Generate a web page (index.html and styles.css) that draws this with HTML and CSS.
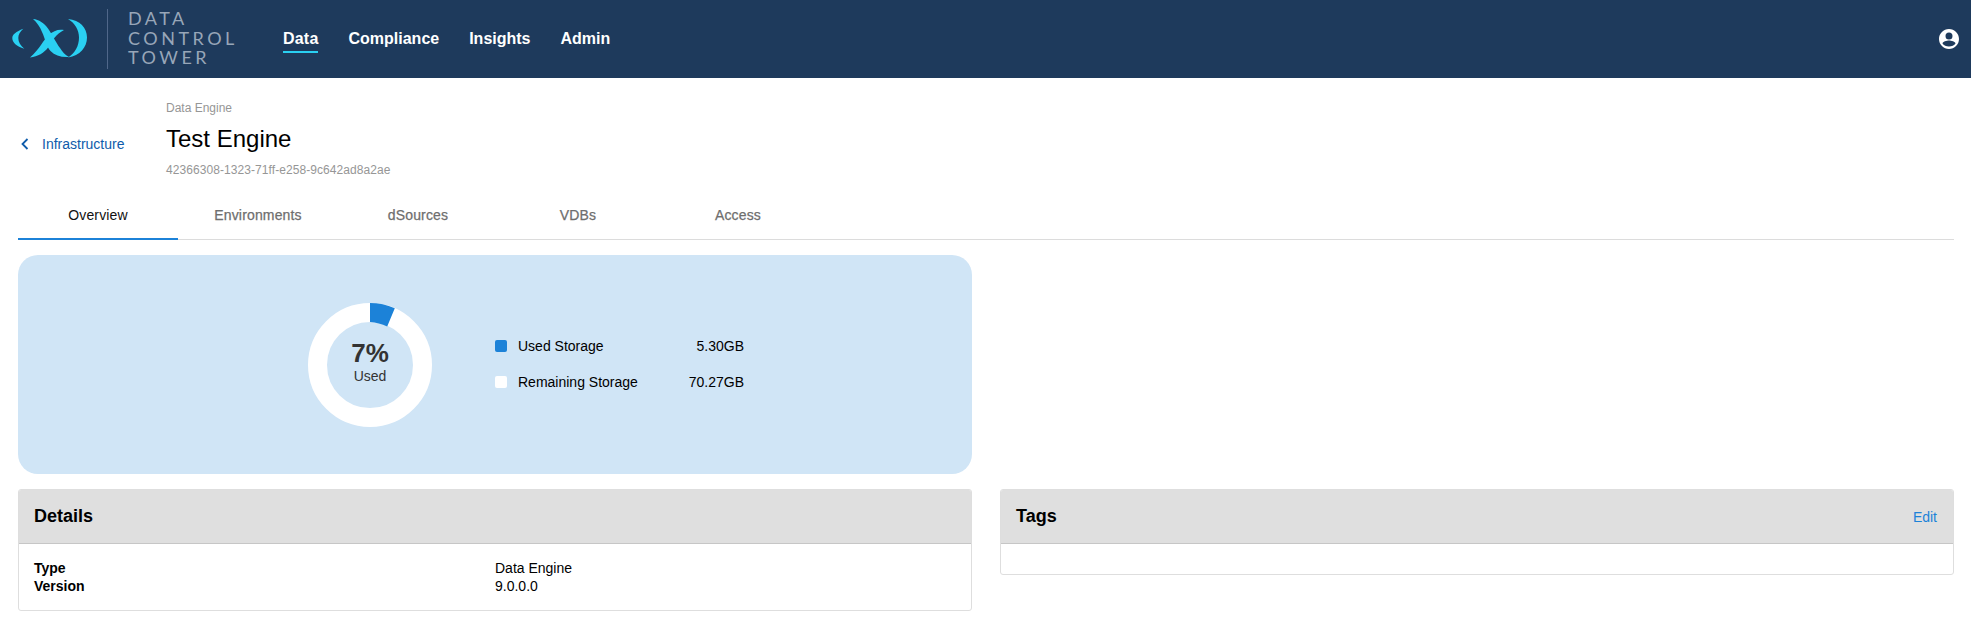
FILE: index.html
```html
<!DOCTYPE html>
<html lang="en">
<head>
<meta charset="utf-8">
<title>Data Control Tower</title>
<link rel="stylesheet" href="styles.css">
</head>
<body>
<header class="topbar">
  <div class="logo">
    <svg class="logo-mark" viewBox="0 0 78 40" width="78" height="40" aria-hidden="true">
      <path class="lm" d="M11.300 9.700 C4 12.500 .3 15.500 .3 19 C.3 23.500 4.500 27.500 12.300 29.700 C8.500 26.500 6.300 23 6.300 19 C6.300 15.500 8 12.500 11.300 9.700Z"/>
      <path class="lm" d="M21 0 C27 .5 32 4 36 9.500 C40 15 44 24 48 29 C50.500 33 53 36 57 38 C49 38.500 43 36.500 38.500 32 C34 27 33 19 30 13 C28 8 25 3.500 21 0Z"/>
      <path class="lm" d="M52 11 C46 10 41 12 37 16 C31 21 28 30 18 38.500 C26 37.500 32 34 36.500 28 C40 22 44 15 52 11Z"/>
      <path class="lm" d="M56 0 C68 1 75 9 75 18.500 C75 28 68 37 56 38.500 C63 34 67 27 67 18.500 C67 11 63 4 56 0Z"/>
    </svg>
    <div class="logo-rule"></div>
    <div class="logo-text"><span>DATA</span><span>CONTROL</span><span>TOWER</span></div>
  </div>
  <nav class="mainnav">
    <a class="nav-item active">Data</a>
    <a class="nav-item">Compliance</a>
    <a class="nav-item">Insights</a>
    <a class="nav-item">Admin</a>
  </nav>
  <svg class="account" viewBox="0 0 24 24" width="24" height="24" aria-hidden="true">
    <path fill="#fff" d="M12 2C6.480 2 2 6.480 2 12s4.480 10 10 10 10-4.480 10-10S17.520 2 12 2zm0 3.500a3.500 3.500 0 1 1 0 7 3.500 3.500 0 0 1 0-7zM12 19.500c-2.800 0-5.300-1.200-6.500-3 .100-1.900 4.300-3 6.500-3s6.400 1.100 6.500 3c-1.200 1.800-3.700 3-6.500 3z"/>
  </svg>
</header>

<main class="page">
  <section class="titlebar">
    <a class="back">
      <svg viewBox="0 0 8 12" width="8" height="12" aria-hidden="true"><path d="M6.500 1 L1.500 6 L6.500 11" fill="none" stroke="#0f5cab" stroke-width="1.800"/></svg>
      <span>Infrastructure</span>
    </a>
    <div class="titles">
      <div class="eyebrow">Data Engine</div>
      <h1>Test Engine</h1>
      <div class="uuid">42366308-1323-71ff-e258-9c642ad8a2ae</div>
    </div>
  </section>

  <div class="tabs">
    <a class="tab active">Overview</a>
    <a class="tab">Environments</a>
    <a class="tab">dSources</a>
    <a class="tab">VDBs</a>
    <a class="tab">Access</a>
  </div>

  <div class="grid">
    <section class="storage">
      <div class="donut">
        <svg viewBox="0 0 124 124" width="124" height="124" aria-hidden="true">
          <circle cx="62" cy="62" r="52.500" fill="none" stroke="#fff" stroke-width="19"/>
          <path d="M62 0 A62 62 0 0 1 86.800 5.200 L79.200 23.600 A43 43 0 0 0 62 19 Z" fill="#1c82d8"/>
        </svg>
        <div class="donut-label"><strong>7%</strong><span>Used</span></div>
      </div>
      <div class="legend">
        <div class="legend-row"><i class="swatch used"></i><span class="legend-name">Used Storage</span><span class="legend-val">5.30GB</span></div>
        <div class="legend-row"><i class="swatch"></i><span class="legend-name">Remaining Storage</span><span class="legend-val">70.27GB</span></div>
      </div>
    </section>
    <div class="spacer"></div>

    <section class="panel">
      <div class="panel-head"><h2>Details</h2></div>
      <div class="panel-body details">
        <b>Type</b><span>Data Engine</span>
        <b>Version</b><span>9.0.0.0</span>
      </div>
    </section>

    <section class="panel tags">
      <div class="panel-head"><h2>Tags</h2><a class="edit">Edit</a></div>
      <div class="panel-body empty"></div>
    </section>
  </div>
</main>
</body>
</html>
```
FILE: styles.css
```css
* { box-sizing: border-box; }
html, body { margin: 0; padding: 0; background: #fff; }
body { font-family: "Liberation Sans", Arial, sans-serif; color: #000; overflow: hidden; }

.topbar { height: 78px; background: #1e3a5c; display: flex; align-items: center; padding: 0 10px 0 12px; }
.logo { display: flex; align-items: center; width: 271px; }
.logo-mark { flex: none; }
.lm { fill: #2ad0f2; }
.logo-rule { width: 1px; height: 60px; background: #50678a; margin-left: 17px; }
.logo-text { display: flex; flex-direction: column; margin-left: 20px; margin-top: -1px; font-family: Lato, sans-serif; font-size: 18px; line-height: 19.500px; letter-spacing: 3.500px; color: #98a6b8; }
.mainnav { display: flex; gap: 30px; flex: 1; }
.nav-item { color: #fff; font-weight: 700; font-size: 16px; line-height: 22px; padding-bottom: 1px; border-bottom: 2px solid transparent; margin-top: 2px; }
.nav-item.active { border-bottom-color: #2ad0f2; letter-spacing: .2px; }
.account { flex: none; }

.page { padding: 0 17px 0 18px; }
.titlebar { display: flex; align-items: center; height: 114px; padding-top: 7px; }
.back { display: flex; align-items: center; gap: 13px; width: 148px; padding-left: 3px; color: #0f5cab; font-size: 14px; margin-top: 10px; }
.eyebrow { font-size: 12px; line-height: 14px; color: #969696; }
h1 { margin: 9px 0 9px; font-size: 24px; font-weight: 400; line-height: 30px; color: #000; }
.uuid { font-size: 12px; line-height: 14px; color: #969696; letter-spacing: .07px; }

.tabs { display: flex; height: 48px; border-bottom: 1px solid #dcdcdc; }
.tab { width: 160px; text-align: center; font-size: 14px; line-height: 47px; color: #6e6e6e; font-weight: 400; letter-spacing: .15px; -webkit-text-stroke: .25px #6e6e6e; }
.tab.active { color: #111; -webkit-text-stroke: 0; border-bottom: 2px solid #1c82d8; height: 48px; }

.grid { display: grid; grid-template-columns: 1fr 1fr; column-gap: 28px; row-gap: 15px; margin-top: 15px; align-items: start; }
.storage { height: 219px; border-radius: 20px; background: #d0e5f6; display: flex; align-items: center; padding: 1px 0 0 290px; }
.donut { position: relative; width: 124px; height: 124px; flex: none; }
.donut svg { display: block; }
.donut-label { position: absolute; inset: 0; display: flex; flex-direction: column; align-items: center; justify-content: center; color: #333; padding-bottom: 6px; }
.donut-label strong { font-size: 26px; line-height: 28px; }
.donut-label span { font-size: 14px; line-height: 18px; }

.legend { margin-left: 63px; padding-bottom: 2px; display: flex; flex-direction: column; gap: 18px; }
.legend-row { display: flex; align-items: center; width: 249px; font-size: 14px; line-height: 18px; }
.swatch { width: 12px; height: 12px; border-radius: 2px; background: #fff; margin-right: 11px; flex: none; }
.swatch.used { background: #1c82d8; }
.legend-name { flex: 1; }

.panel { border: 1px solid #dedede; border-radius: 3px; overflow: hidden; }
.panel-head { height: 54px; background: #dfdfdf; border-bottom: 1px solid #c6c6c6; display: flex; align-items: center; justify-content: space-between; padding: 0 16px 0 15px; }
h2 { margin: 0; font-size: 18px; font-weight: 700; }
.edit { font-size: 14px; color: #1c82d8; }
.details { display: grid; grid-template-columns: 461px 1fr; align-content: start; padding: 15px 15px; font-size: 14px; line-height: 18px; height: 66px; }
.empty { height: 30px; }
```
